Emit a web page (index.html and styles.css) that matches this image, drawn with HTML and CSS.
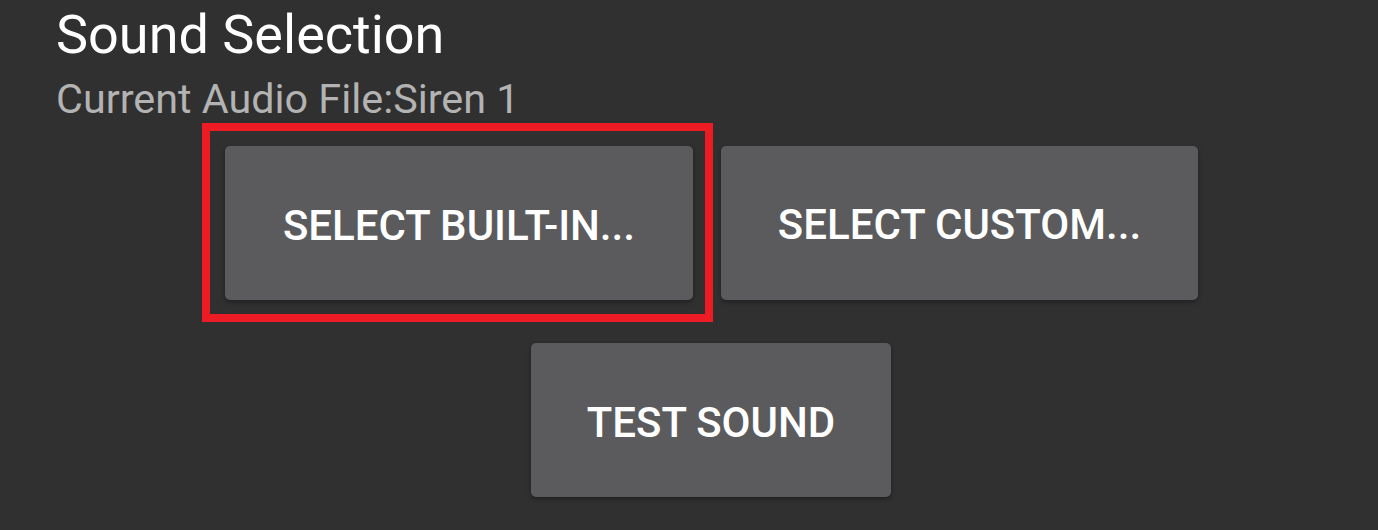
FILE: index.html
```html
<!DOCTYPE html>
<html>
<head>
<meta charset="utf-8">
<link rel="stylesheet" href="styles.css">
</head>
<body>
<div class="screen">
  <div class="header">
    <div class="title">Sound Selection</div>
    <div class="subtitle">Current Audio File:Siren 1</div>
  </div>
  <div class="row row-top">
    <div class="highlight">
      <button class="btn btn-builtin">SELECT BUILT-IN...</button>
    </div>
    <button class="btn btn-custom">SELECT CUSTOM...</button>
  </div>
  <div class="row row-bottom">
    <button class="btn btn-test">TEST SOUND</button>
  </div>
</div>
</body>
</html>
```

FILE: styles.css
```css
html, body {
  margin: 0;
  padding: 0;
  background: #303030;
}
.screen {
  width: 1378px;
  height: 530px;
  overflow: hidden;
  background: #303030;
  font-family: Roboto, "Noto Sans", sans-serif;
}
.header {
  padding: 8px 0 0 56px;
}
.title {
  font-size: 54px;
  line-height: 53px;
  color: #ffffff;
  font-weight: 400;
}
.subtitle {
  margin-top: 18px;
  font-size: 41.3px;
  line-height: 40px;
  color: #b3b3b3;
}
.row {
  display: flex;
  align-items: center;
}
.row-top {
  margin-top: 4px;
  padding-left: 202px;
  gap: 8px;
}
.row-bottom {
  margin-top: 21px;
  padding-left: 531px;
}
.highlight {
  border: 8px solid #ed1c24;
  padding: 15px 12px 14px 15px;
  display: flex;
}
.btn {
  display: flex;
  align-items: center;
  justify-content: center;
  height: 154px;
  padding: 4px 0 0 0;
  border: none;
  border-radius: 5px;
  background: #5b5b5d;
  color: #ffffff;
  font-family: "Roboto Medium", Roboto, "Noto Sans", sans-serif;
  font-weight: 500;
  font-size: 42px;
  box-shadow: 0 2px 4px rgba(0, 0, 0, 0.35);
}
.btn-builtin { width: 468px; }
.btn-custom { width: 477px; }
.btn-test { width: 360px; }
```
